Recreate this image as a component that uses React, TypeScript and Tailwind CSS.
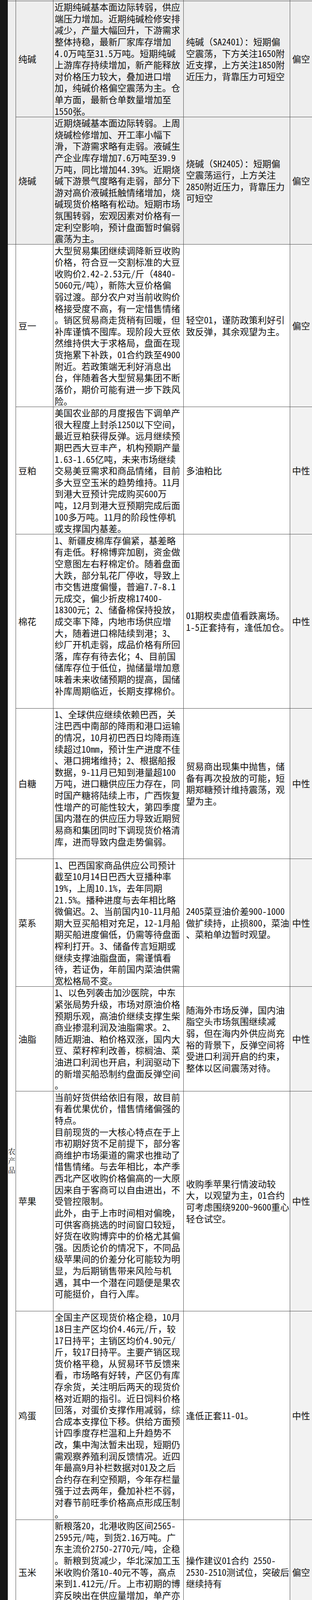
type Row = {
  name: string;
  analysis: string[];
  strategy: string[];
  view: string;
};

const chemRows: Row[] = [
  {
    name: '纯碱',
    analysis: [
      '近期纯碱基本面边际转弱，供应',
      '端压力增加。近期纯碱检修安排',
      '减少，产量大幅回升，下游需求',
      '整体持稳，最新厂家库存增加',
      '4.0万吨至31.5万吨。短期纯碱',
      '上游库存持续增加，新产能释放',
      '对价格压力较大，叠加进口增',
      '加，纯碱价格偏空震荡为主。仓',
      '单方面，最新仓单数量增加至',
      '1550张。',
    ],
    strategy: ['纯碱（SA2401）：短期偏', '空震荡，下方关注1650附', '近支撑，上方关注1850附', '近压力，背靠压力可短空'],
    view: '偏空',
  },
  {
    name: '烧碱',
    analysis: [
      '近期烧碱基本面边际转弱。上周',
      '烧碱检修增加、开工率小幅下',
      '滑，下游需求略有走弱。液碱生',
      '产企业库存增加7.6万吨至39.9',
      '万吨，同比增加44.39%。近期烧',
      '碱下游景气度略有走弱，部分下',
      '游对高价液碱抵触情绪增加，烧',
      '碱现货价格略有松动。短期市场',
      '氛围转弱，宏观因素对价格有一',
      '定利空影响，预计盘面暂时偏弱',
      '震荡为主。',
    ],
    strategy: ['烧碱（SH2405）：短期偏', '空震荡运行，上方关注', '2850附近压力，背靠压力', '可短空'],
    view: '偏空',
  },
];

const farmRows: Row[] = [
  {
    name: '豆一',
    analysis: [
      '大型贸易集团继续调降新豆收购',
      '价格，符合豆一交割标准的大豆',
      '收购价2.42-2.53元/斤（4840-',
      '5060元/吨），新陈大豆价格偏',
      '弱过渡。部分农户对当前收购价',
      '格接受度不高，有一定惜售情绪',
      '。销区贸易商走货稍有回暖，但',
      '补库谨慎不囤库。现阶段大豆依',
      '然维持供大于求格局，盘面在现',
      '货拖累下补跌，01合约跌至4900',
      '附近。若政策端无利好消息出',
      '台，伴随着各大型贸易集团不断',
      '落价，期价可能有进一步下跌风',
      '险。',
    ],
    strategy: ['轻空01，谨防政策利好引', '致反弹，其余观望为主。'],
    view: '偏空',
  },
  {
    name: '豆粕',
    analysis: [
      '美国农业部的月度报告下调单产',
      '很大程度上封杀1250以下空间，',
      '最近豆粕获得反弹。远月继续预',
      '期巴西大豆丰产，机构预期产量',
      '1.63-1.65亿吨，未来市场继续',
      '交易美豆需求和商品情绪，目前',
      '多大豆空玉米的趋势维持。11月',
      '到港大豆预计完成购买600万',
      '吨，12月到港大豆预期完成后面',
      '100多万吨。11月的阶段性停机',
      '或支撑国内基差。',
    ],
    strategy: ['多油粕比'],
    view: '中性',
  },
  {
    name: '棉花',
    analysis: [
      '1、新疆皮棉库存偏紧，基差略',
      '有走低。籽棉博弈加剧，资金做',
      '空意图左右籽棉定价。随着盘面',
      '大跌，部分轧花厂停收，导致上',
      '市交售进度偏慢，普遍7.7-8.1',
      '元成交，偏少折皮棉17400-',
      '18300元；2、储备棉保持投放，',
      '成交率下降，内地市场供应增',
      '大，随着进口棉陆续到港；3、',
      '纱厂开机走弱，成品价格有所回',
      '落，库存有待去化；4、目前国',
      '储库存位于低位，抛储量增加意',
      '味着未来收储预期的提高，国储',
      '补库周期临近，长期支撑棉价。',
      '',
    ],
    strategy: ['01期权卖虚值看跌离场。', '1-5正套持有，逢低加仓。'],
    view: '中性',
  },
  {
    name: '白糖',
    analysis: [
      '1、全球供应继续依赖巴西，关',
      '注巴西中南部的降雨和港口运输',
      '的情况，10月初巴西日均降雨连',
      '续超过10mm，预计生产进度不佳',
      '、港口拥堵维持；2、根据船报',
      '数据，9-11月已知到港量超100',
      '万吨，进口糖供应压力存在，同',
      '时国产糖将陆续上市，广西恢复',
      '性增产的可能性较大，第四季度',
      '国内潜在的供应压力导致近期贸',
      '易商和集团同时下调现货价格清',
      '库，进而导致内盘走势偏弱。',
      '',
    ],
    strategy: ['贸易商出现集中抛售，储', '备有再次投放的可能，短', '期郑糖预计维持震荡，观', '望为主。'],
    view: '中性',
  },
  {
    name: '菜系',
    analysis: [
      '1、巴西国家商品供应公司预计',
      '截至10月14日巴西大豆播种率',
      '19%，上周10.1%，去年同期',
      '21.5%。播种进度与去年相比略',
      '微偏迟。2、当前国内10-11月船',
      '期大豆买船相对充足，12-1月船',
      '期买船进度偏低，仍需等待盘面',
      '榨利打开。3、储备传言短期或',
      '继续支撑油脂盘面，需谨慎看',
      '待，若证伪，年前国内菜油供需',
      '宽松格局不变。',
    ],
    strategy: ['2405菜豆油价差900-1000', '做扩续持，止损800，菜油', '、菜粕单边暂时观望。'],
    view: '中性',
  },
  {
    name: '油脂',
    analysis: [
      '1、以色列袭击加沙医院，中东',
      '紧张局势升级，市场对原油价格',
      '预期乐观，高油价继续支撑生柴',
      '商业掺混利润及油脂需求。2、',
      '随近期油、粕价格双涨，国内大',
      '豆、菜籽榨利改善，棕榈油、菜',
      '油进口利润也开启，利润驱动下',
      '的新增买船恐制约盘面反弹空间',
      '。',
    ],
    strategy: [
      '随海外市场反弹，国内油',
      '脂空头市场氛围继续减',
      '弱，但在海内外供应尚充',
      '裕的背景下，反弹空间将',
      '受进口利润开启的约束，',
      '整体以区间震荡对待。',
    ],
    view: '中性',
  },
  {
    name: '苹果',
    analysis: [
      '当前好货供给依旧有限，故目前',
      '有着优果优价，惜售情绪偏强的',
      '特点。',
      '目前现货的一大核心特点在于上',
      '市初期好货不足前提下，部分客',
      '商维护市场渠道的需求也推动了',
      '惜售情绪。与去年相比，本产季',
      '西北产区收购价格偏高的一大原',
      '因来自于客商可以自由进出，不',
      '受管控限制。',
      '此外，由于上市时间相对偏晚，',
      '可供客商挑选的时间窗口较短，',
      '好货在收购博弈中的价格尤其偏',
      '强。因质论价的情况下，不同品',
      '级苹果间的价差分化可能较为明',
      '显，为后期销售带来风险与机',
      '遇，其中一个潜在问题便是果农',
      '可能挺价，自行入库。',
      '',
    ],
    strategy: ['收购季苹果行情波动较', '大，以观望为主，01合约', '可考虑围绕9200~9600重心', '轻仓试空。'],
    view: '中性',
  },
  {
    name: '鸡蛋',
    analysis: [
      '全国主产区现货价格企稳，10月',
      '18日主产区均价4.46元/斤，较',
      '17日持平；主销区均价4.90元/',
      '斤，较17日持平。主要产销区现',
      '货价格平稳，从贸易环节反馈来',
      '看，市场略有好转，产区仍有库',
      '存余货，关注明后两天的现货价',
      '格对近期的指引。近日饲料价格',
      '回落，对蛋价支撑作用减弱，综',
      '合成本支撑位下移。供给方面预',
      '计四季度存栏温和上升趋势不',
      '改，集中淘汰暂未出现，短期仍',
      '需观察养殖利润反馈情况。近四',
      '年最高9月补栏数据对01及之后',
      '合约存在利空预期，今年存栏量',
      '强于过去两年，叠加补栏不弱，',
      '对春节前旺季价格高点形成压制',
      '。',
    ],
    strategy: ['逢低正套11-01。'],
    view: '中性',
  },
  {
    name: '玉米',
    analysis: [
      '新粮落20，北港收购区间2565-',
      '2595元/吨，到货2.16万吨。广',
      '东主流价2750-2770元/吨，企稳',
      '。新粮到货减少，华北深加工玉',
      '米收购价落10-40元不等，高点',
      '来到1.412元/斤。上市初期的博',
      '弈反映出在供应量增加，单产亦',
      '改变成本预期，下游消费趋于稳',
      '中偏弱，期现价格承压。',
    ],
    strategy: ['操作建议01合约 2550-', '2530-2510测试位，突破后', '继续持有'],
    view: '偏空',
  },
  {
    name: '淀粉',
    analysis: [
      '新粮到货减少，华北深加工玉米',
      '收购价落10-40元不等，高点来',
      '到1.412元/斤，晨间到货720',
      '车，前一日747车。淀粉方面，',
      '下游需求回升，货源偏紧，报价',
      '上涨10-20元/吨；华南市场购销',
      '积极，下游需求良好，价格趋于',
      '稳定。淀粉需要考虑当前原料放',
      '量，下游按需供货的局面有利于',
      '加工利润的修复。',
    ],
    strategy: ['操作建议观望为主，米粉', '价差做扩。'],
    view: '偏空',
  },
  {
    name: '生猪',
    analysis: [
      '现货价格企稳偏强，需求恢复，',
      '同时供给端有部分挺价情绪，市',
      '场有望再度接近前期价格中枢。',
      '供给侧：生猪出栏相对稳定，现',
      '货价格上行，导致部分养殖户有',
      '惜售压栏想法，刺激二育。目前',
      '体重提升趋势稳定，整体供给聚',
      '集在四季度的态势比较明显，限',
      '制价格因季节性需求的上行幅度',
      '。',
      '需求侧：降温后季节性需求预计',
      '缓慢恢复，距离腌腊等集中需求',
      '阶段还有较长时间，短期需求恢',
      '复至节前水平后，再关注腌腊启',
      '动时间。',
    ],
    strategy: [
      '前期套保持有，反套策略',
      '止盈离场，整体依旧逢高',
      '沽空为主，但短期恐面临',
      '波动，短多注意离场节',
      '奏，阶段性企稳后仍面临',
      '持续压力。',
    ],
    view: '中性',
  },
  {
    name: '纸浆',
    analysis: [
      '关注焦点：东北俄针报价6100元',
      '/吨持平。乌拉圭8月向我国出口',
      '阔叶浆13.51万吨，环比',
      '+18.5%，同比+50.1%。欧洲港口',
      '库存8月底环比上升5万吨，基本',
      '持平于7月底数据。我国9月海关',
      '进口纸浆总量326.5万吨，环比-',
      '0.7%，同比+30.5%。新Kemi浆厂',
      '投产，满产情况下预计带来80万',
      '吨针叶浆增量，crofton或复',
      '产，供应进一步宽松。下游纸厂',
      '的涨价函等涨价幅度放缓，瓦楞',
      '原纸出现零星的地区性上涨，纸',
      '浆后市涨幅有限。',
    ],
    strategy: ['观望04轻仓多'],
    view: '中性',
  },
];

const countLines = (rows: Row[]) => rows.reduce((n, r) => n + r.analysis.length, 0);

// one text line: takes an equal share of its column, text centred in it
function TextLine({ text }: { text: string }) {
  return (
    <div className="flex-1 basis-0 min-h-0 flex items-center whitespace-nowrap font-['Noto_Sans_Mono_CJK_SC','Noto_Sans_CJK_SC',sans-serif] text-[23px] leading-none text-[#111]">
      {text || '\u00a0'}
    </div>
  );
}

function ProductRow({ row, shade }: { row: Row; shade?: boolean }) {
  const n = row.analysis.length;
  const pad = (n - row.strategy.length) / 2;
  return (
    <div
      className={`flex basis-0 min-h-0 border-b border-[#4a4a4a] ${shade ? 'bg-[#eeeeee]' : 'bg-white'}`}
      style={{ flexGrow: n }}
    >
      <div className="w-[96px] shrink-0 flex items-center pl-[6px] border-r border-[#4a4a4a] font-['Noto_Sans_Mono_CJK_SC','Noto_Sans_CJK_SC',sans-serif] text-[23px] leading-none text-[#111]">
        {row.name}
      </div>
      <div className="w-[334px] shrink-0 flex flex-col pl-[3px] border-r border-[#4a4a4a]">
        {row.analysis.map((l, i) => (
          <TextLine key={i} text={l} />
        ))}
      </div>
      <div className="w-[273px] shrink-0 flex flex-col pl-[6px] border-r border-[#4a4a4a]">
        <div className="basis-0 min-h-0" style={{ flexGrow: pad }} />
        {row.strategy.map((l, i) => (
          <TextLine key={i} text={l} />
        ))}
        <div className="basis-0 min-h-0" style={{ flexGrow: pad }} />
      </div>
      <div
        className={`flex-1 flex items-center pl-[5px] whitespace-nowrap font-['Noto_Sans_Mono_CJK_SC','Noto_Sans_CJK_SC',sans-serif] text-[23px] leading-none text-[#111] ${shade ? '' : 'bg-[#f2f2f2]'}`}
      >
        {row.view}
      </div>
    </div>
  );
}

export default function App() {
  return (
    <div className="flex h-[5317px] bg-white">
      <div className="w-[20px] shrink-0 bg-[#161616]" />
      <div className="w-[780px] shrink-0 flex flex-col">
        {/* tail of the row above the cut */}
        <div className="flex h-[3px] shrink-0 border-b border-[#4a4a4a] bg-[#eeeeee]">
          <div className="w-[21px] shrink-0 border-r border-[#4a4a4a]" />
          <div className="w-[96px] shrink-0 border-r border-[#4a4a4a]" />
          <div className="w-[334px] shrink-0 border-r border-[#4a4a4a]" />
          <div className="w-[273px] shrink-0 border-r border-[#4a4a4a]" />
          <div className="flex-1" />
        </div>

        {/* chemicals group, its label sits above the cut */}
        <div className="flex basis-0 min-h-0 bg-[#eeeeee]" style={{ flexGrow: countLines(chemRows) }}>
          <div className="w-[21px] shrink-0 border-r border-b border-[#4a4a4a]" />
          <div className="flex-1 flex flex-col">
            {chemRows.map((r) => (
              <ProductRow key={r.name} row={r} shade />
            ))}
          </div>
        </div>

        {/* agricultural group */}
        <div className="flex basis-0 min-h-0" style={{ flexGrow: countLines(farmRows) }}>
          <div className="w-[21px] shrink-0 border-r border-b border-[#4a4a4a] flex items-center justify-center">
            <div className="font-['Noto_Serif_CJK_SC','Liberation_Serif',serif] text-[19px] leading-6 text-center text-[#111]">
              农<br />产<br />品
            </div>
          </div>
          <div className="flex-1 flex flex-col">
            {farmRows.map((r) => (
              <ProductRow key={r.name} row={r} />
            ))}
          </div>
        </div>

        {/* start of the next row */}
        <div className="flex h-[1px] shrink-0 bg-white">
          <div className="w-[21px] shrink-0 border-r border-[#4a4a4a]" />
          <div className="w-[96px] shrink-0 border-r border-[#4a4a4a]" />
          <div className="w-[334px] shrink-0 border-r border-[#4a4a4a]" />
          <div className="w-[273px] shrink-0 border-r border-[#4a4a4a]" />
          <div className="flex-1 bg-[#f2f2f2]" />
        </div>
      </div>
    </div>
  );
}
